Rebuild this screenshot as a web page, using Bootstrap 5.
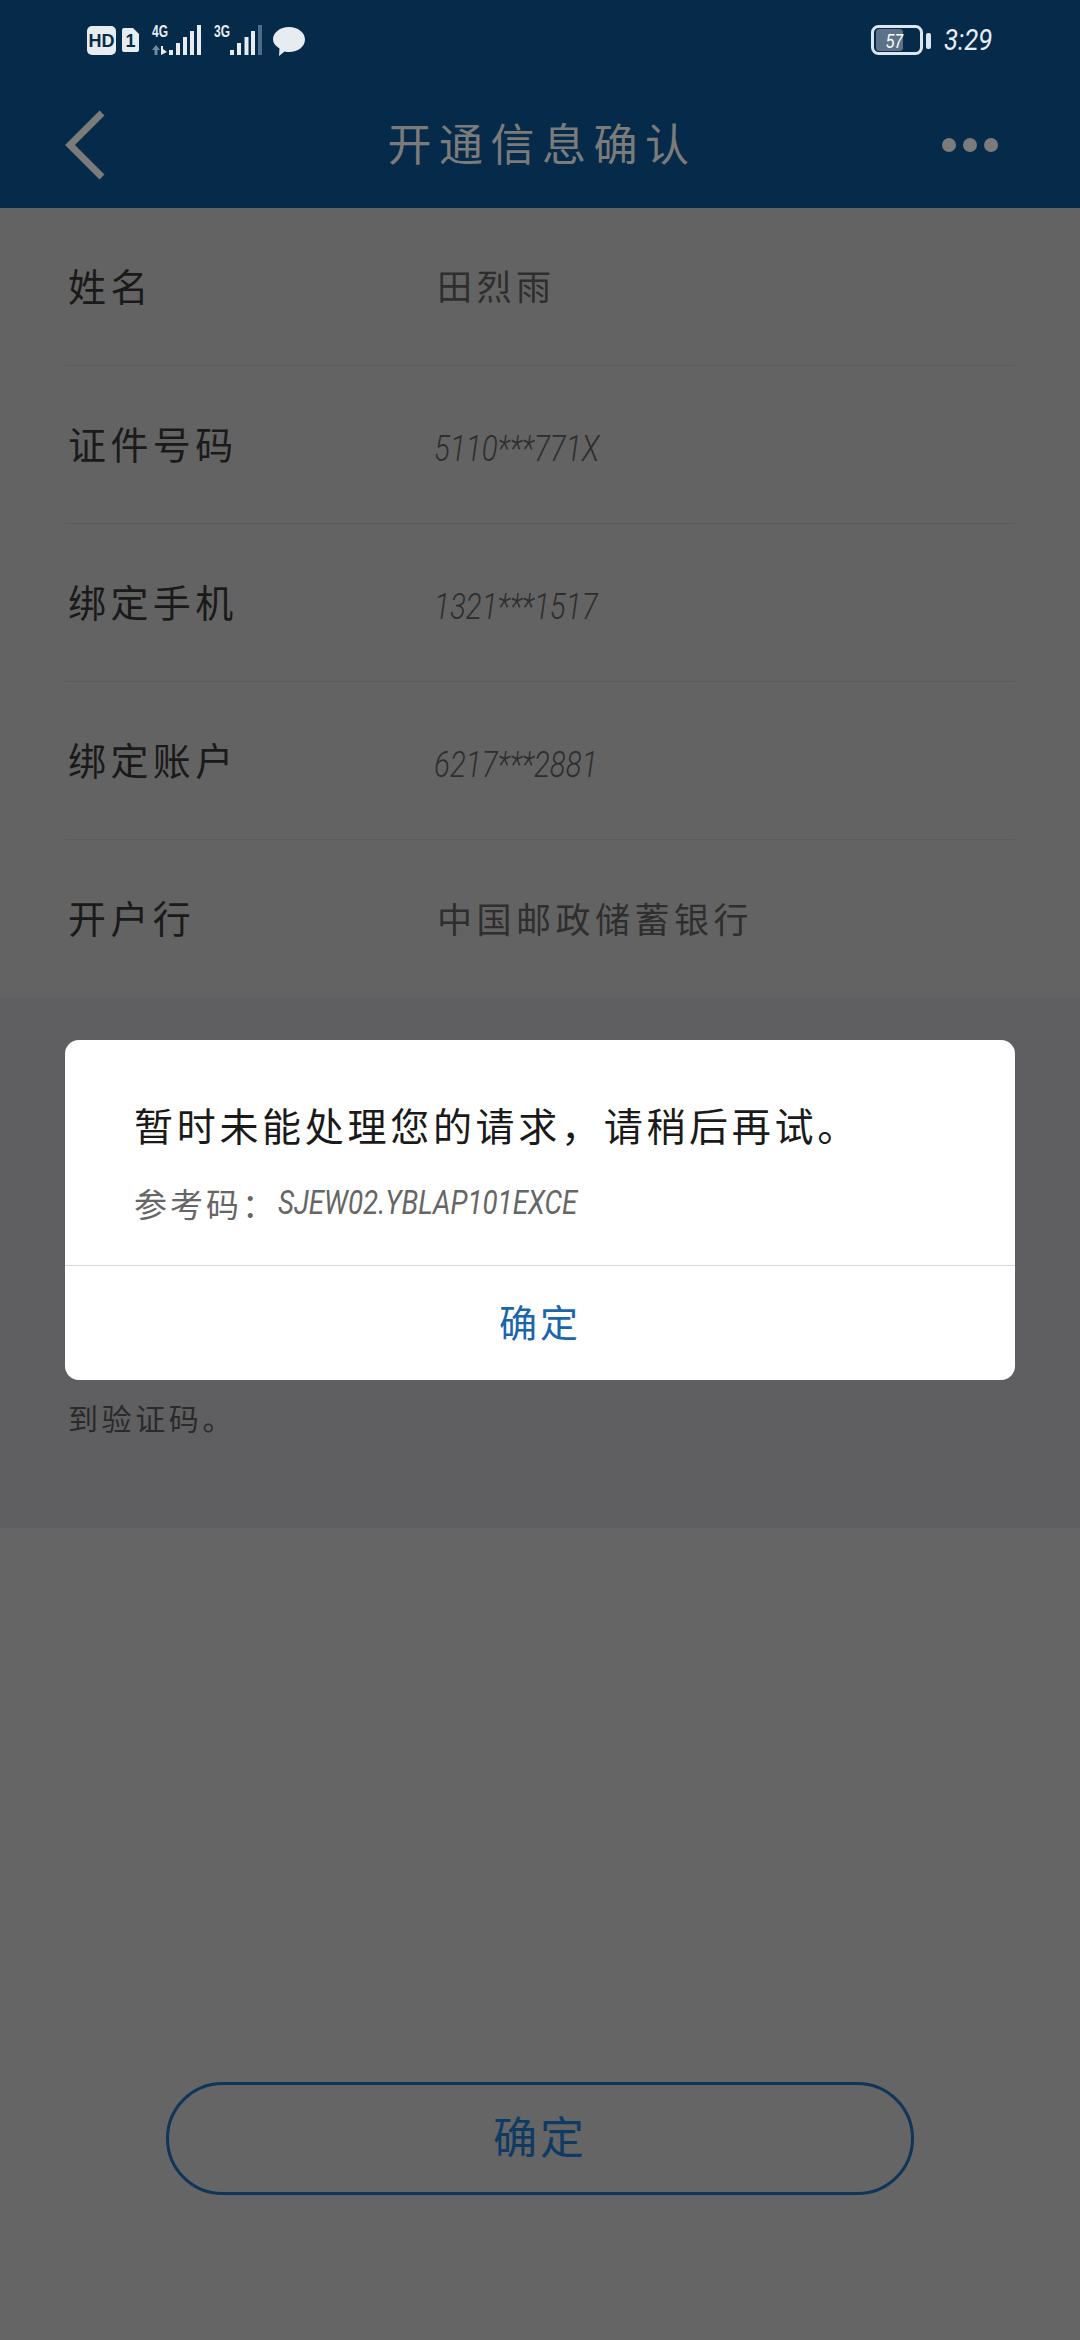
<!doctype html>
<html lang="zh-CN"><head><meta charset="utf-8">
<title>开通信息确认</title>
<link href="https://cdn.jsdelivr.net/npm/bootstrap@5.3.0/dist/css/bootstrap.min.css" rel="stylesheet">
<style>
html,body{margin:0;height:2340px;width:1080px;overflow:hidden}
body{background:#656565;font-family:"Noto Sans CJK SC","Liberation Sans",sans-serif;position:relative}
.latin{font-family:Roboto,"Liberation Sans",sans-serif;font-style:italic;font-weight:300;display:inline-block;transform-origin:left center;white-space:nowrap}
.top-wrap{background:#062a4a;height:208px}
.stat-row{height:82px;padding:20px 0 0 80px}
.stat-right{padding-right:88px}
.clock{font-size:30px;color:#e8eef3;line-height:40px;margin-left:12px;width:48px;transform:scaleX(.86);font-weight:400}
.nav-row{height:126px;padding:0 82px 0 62px}
.page-title{font-size:44px;letter-spacing:7.500px;color:#7b7b7b;line-height:1;margin:0;position:absolute;left:4px;right:0;top:120px;text-align:center;font-weight:400}
.dot3{width:14px;height:14px;border-radius:50%;background:#7b7b7b}
.dots-gap{gap:7px}
.rows-wrap{background:#636363;height:789px}
.rows-list{padding:0 65px;--bs-list-group-bg:transparent}
.info-row{height:158px;background:transparent;border-color:#5b5b5b!important;padding:0;display:flex;align-items:center}
.info-key{width:369px;padding:0 0 4px 3px;font-size:38px;letter-spacing:4.400px;color:#1a1a1a;line-height:1}
.info-val{font-size:35px;letter-spacing:4.500px;color:#2e2e2e;line-height:1;padding:0 0 4px 3px}
.info-val.latin{font-size:36px;letter-spacing:0;padding:8px 0 0 0;transform:scaleX(.82)}
.note-wrap{background:#5f5f62;height:531px;padding:402px 0 0 68px}
.note-text{font-size:30px;letter-spacing:3.600px;color:#2a2a2a;line-height:36px;margin:0}
.btn-wrap{padding-top:554px;padding-left:166px}
.btn-confirm{width:748px;height:113px;border:3px solid #0f3558;color:#0e3a63;font-size:44px;letter-spacing:3px;line-height:1;background:transparent;display:flex;align-items:center;justify-content:center;padding:0 0 8px}
.dlg{position:absolute;left:65px;top:1040px;width:950px;height:340px;border:0;border-radius:14px;background:#fff}
.dlg-body{height:225px;padding:62px 0 0 69px}
.dlg-msg{font-size:39px;letter-spacing:3.700px;color:#1a1a1a;line-height:44px;margin:0}
.dlg-ref{font-size:33px;color:#666;line-height:40px;margin:37px 0 0;display:flex;align-items:center}
.dlg-ref span:first-child{letter-spacing:3px}
.dlg-ref .latin{font-size:33px;transform:scaleX(.84);font-weight:400}
.dlg-foot{height:115px;border-top:1px solid #d9d9d9;background:transparent;padding:0 0 6px;color:#1a66ad;font-size:38px;letter-spacing:3px;display:flex;align-items:center;justify-content:center}
</style></head>
<body>
<header class="top-wrap">
  <div class="stat-row d-flex justify-content-between align-items-start">
    <svg width="232" height="40" viewBox="80 20 232 40" xmlns="http://www.w3.org/2000/svg">
      <rect x="87" y="26" width="29" height="29" rx="5" fill="#e6ecf0"/>
      <text x="88.500" y="47" textLength="26" lengthAdjust="spacingAndGlyphs" font-family="Liberation Sans" font-weight="700" font-size="19" fill="#062a4a">HD</text>
      <path d="M124 28h9l6 6v16a2 2 0 0 1-2 2h-13a2 2 0 0 1-2-2V30a2 2 0 0 1 2-2z" fill="#e6ecf0"/>
      <text x="130.500" y="47" text-anchor="middle" font-family="Liberation Sans" font-weight="700" font-size="18" fill="#062a4a">1</text>
      <text x="152" y="37" textLength="16" lengthAdjust="spacingAndGlyphs" font-family="Liberation Sans" font-weight="700" font-size="17" fill="#e6ecf0">4G</text>
      <path d="M156 45l-4 5h2.500v5h3v-5h2.500z" fill="#6f8aa3"/>
      <path d="M161 46h2v3l4 3-6 3z" fill="#e6ecf0"/>
      <g fill="#e6ecf0"><rect x="169" y="50" width="4" height="5"/><rect x="176" y="43" width="4" height="12"/><rect x="183" y="37" width="4" height="18"/><rect x="190" y="31" width="4" height="24"/><rect x="197" y="25" width="4" height="30"/></g>
      <text x="214" y="37" textLength="16" lengthAdjust="spacingAndGlyphs" font-family="Liberation Sans" font-weight="700" font-size="17" fill="#e6ecf0">3G</text>
      <g fill="#e6ecf0"><rect x="230" y="50" width="4" height="5"/><rect x="237" y="43" width="4" height="12"/><rect x="244.500" y="37" width="4" height="18"/><rect x="251" y="31" width="4" height="24"/></g>
      <rect x="258" y="25" width="4" height="30" fill="#4f6a85"/>
      <path d="M289 27c9 0 16 5.500 16 12.500S298 52 289 52c-1.500 0-3 0-4.500-.5L279 56l.5-7.500C275.500 46 273 43 273 39.500 273 32.500 280 27 289 27z" fill="#e6ecf0"/>
    </svg>
    <div class="stat-right d-flex align-items-center">
      <svg width="62" height="40" viewBox="870 20 62 40" xmlns="http://www.w3.org/2000/svg">
        <rect x="876" y="29" width="27" height="22" rx="3" fill="#5d7188"/>
        <rect x="872.500" y="26.500" width="49" height="27" rx="6" fill="none" stroke="#dde6ee" stroke-width="3"/>
        <text x="886" y="48" textLength="17" lengthAdjust="spacingAndGlyphs" font-family="Liberation Sans" font-style="italic" font-size="20" fill="#fff">57</text>
        <rect x="926" y="33" width="5" height="16" rx="2" fill="#dde6ee"/>
      </svg>
      <span class="clock latin">3:29</span>
    </div>
  </div>
  <nav class="nav-row d-flex justify-content-between align-items-center">
    <svg width="44" height="72" viewBox="0 0 44 72" aria-label="返回" xmlns="http://www.w3.org/2000/svg"><path d="M40 4 8 36l32 32" fill="none" stroke="#7b7b7b" stroke-width="7"/></svg>
    <h1 class="page-title">开通信息确认</h1>
    <div class="d-flex dots-gap"><span class="dot3"></span><span class="dot3"></span><span class="dot3"></span></div>
  </nav>
</header>
<main>
  <section class="rows-wrap">
    <div class="list-group list-group-flush rows-list">
      <div class="list-group-item info-row"><span class="info-key">姓名</span><span class="info-val">田烈雨</span></div>
      <div class="list-group-item info-row"><span class="info-key">证件号码</span><span class="info-val latin">5110***771X</span></div>
      <div class="list-group-item info-row"><span class="info-key">绑定手机</span><span class="info-val latin">1321***1517</span></div>
      <div class="list-group-item info-row"><span class="info-key">绑定账户</span><span class="info-val latin">6217***2881</span></div>
      <div class="list-group-item info-row border-0"><span class="info-key">开户行</span><span class="info-val">中国邮政储蓄银行</span></div>
    </div>
  </section>
  <section class="note-wrap"><p class="note-text">到验证码。</p></section>
  <div class="btn-wrap"><button type="button" class="btn rounded-pill btn-confirm">确定</button></div>
</main>
<div class="card dlg">
  <div class="card-body dlg-body">
    <p class="dlg-msg">暂时未能处理您的请求，请稍后再试。</p>
    <p class="dlg-ref"><span>参考码：</span><span class="latin">SJEW02.YBLAP101EXCE</span></p>
  </div>
  <div class="card-footer dlg-foot">确定</div>
</div>
</body></html>
